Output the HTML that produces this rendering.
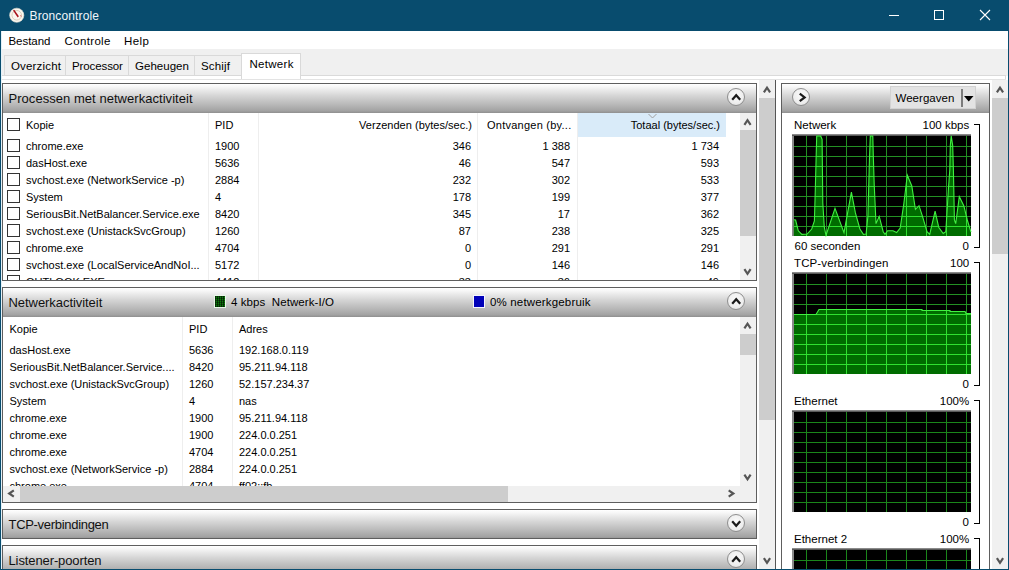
<!DOCTYPE html><html><head><meta charset="utf-8"><style>
*{box-sizing:border-box;}
html,body{margin:0;padding:0;}
body{width:1009px;height:570px;overflow:hidden;position:relative;background:#fff;font-family:"Liberation Sans",sans-serif;font-size:11px;color:#000;}
.a{position:absolute;}
svg.a{overflow:visible;}
.t{position:absolute;white-space:nowrap;}
.btn{position:absolute;width:18px;height:18px;border-radius:50%;border:1px solid #8e8e8e;background:radial-gradient(circle at 50% 40%,#fafafa 0%,#eeeeee 60%,#dadada 100%);}
</style></head><body>
<div class="a" style="left:0px;top:0px;width:1009px;height:31px;background:#084c6e;"></div>
<svg class="a" style="left:9px;top:7px" width="16" height="16" viewBox="0 0 16 16">
<circle cx="7.75" cy="8.25" r="7.1" fill="#fbf7ef" stroke="#e8e0d4" stroke-width="0.6"/>
<circle cx="7.75" cy="8.25" r="4.8" fill="none" stroke="#d6cab6" stroke-width="0.9"/>
<polygon points="4,3.6 5.3,2.8 9.9,9.3 8.7,10.4" fill="#a8121a"/>
<path d="M11.6 8.2 L12.2 9.6" stroke="#d05050" stroke-width="0.9"/></svg>
<div class="t" style="left:29.50px;top:8.84px;font-size:12px;line-height:14px;color:#f0f6fa;letter-spacing:0.130px;">Broncontrole</div>
<div class="a" style="left:889px;top:15px;width:10px;height:1px;background:#fff;"></div>
<div class="a" style="left:934px;top:10px;width:10px;height:10px;border:1px solid #fff;"></div>
<svg class="a" style="left:979px;top:9px" width="12" height="12" viewBox="0 0 12 12"><path d="M1 1 L11 11 M11 1 L1 11" stroke="#fff" stroke-width="1.1"/></svg>
<div class="t" style="left:8.50px;top:34.02px;font-size:11.5px;line-height:14px;color:#000;letter-spacing:-0.046px;">Bestand</div>
<div class="t" style="left:64.50px;top:34.02px;font-size:11.5px;line-height:14px;color:#000;letter-spacing:0.351px;">Controle</div>
<div class="t" style="left:124.00px;top:34.02px;font-size:11.5px;line-height:14px;color:#000;letter-spacing:0.423px;">Help</div>
<div class="a" style="left:1px;top:49px;width:1007px;height:27px;background:#f0f0f0;"></div>
<div class="a" style="left:1px;top:75px;width:1005px;height:1px;background:#dadada;"></div>
<div class="a" style="left:1px;top:76px;width:1005px;height:3px;background:#fff;"></div>
<div class="a" style="left:1005px;top:75px;width:1px;height:5px;background:#dadada;"></div>
<div class="a" style="left:2px;top:79px;width:1004px;height:1px;background:#e3e3e3;"></div>
<div class="a" style="left:4px;top:55px;width:62px;height:21px;border:1px solid #d9d9d9;background:#f0f0f0;"></div>
<div class="t" style="left:11.00px;top:59.02px;font-size:11.5px;line-height:14px;color:#000;letter-spacing:0.169px;">Overzicht</div>
<div class="a" style="left:65px;top:55px;width:64px;height:21px;border:1px solid #d9d9d9;background:#f0f0f0;"></div>
<div class="t" style="left:72.00px;top:59.02px;font-size:11.5px;line-height:14px;color:#000;letter-spacing:-0.106px;">Processor</div>
<div class="a" style="left:128px;top:55px;width:67px;height:21px;border:1px solid #d9d9d9;background:#f0f0f0;"></div>
<div class="t" style="left:135.00px;top:59.02px;font-size:11.5px;line-height:14px;color:#000;letter-spacing:0.030px;">Geheugen</div>
<div class="a" style="left:194px;top:55px;width:48px;height:21px;border:1px solid #d9d9d9;background:#f0f0f0;"></div>
<div class="t" style="left:201.00px;top:59.02px;font-size:11.5px;line-height:14px;color:#000;letter-spacing:0.160px;">Schijf</div>
<div class="a" style="left:241px;top:53px;width:60px;height:26px;border:1px solid #d9d9d9;border-bottom:none;background:#fff;"></div>
<div class="t" style="left:249.50px;top:57.02px;font-size:11.5px;line-height:14px;color:#000;letter-spacing:0.291px;">Netwerk</div>
<div class="a" style="left:2px;top:83px;width:755px;height:1px;background:#5e5e5e;"></div>
<div class="a" style="left:2px;top:83px;width:1px;height:30px;background:#5e5e5e;"></div>
<div class="a" style="left:756px;top:83px;width:1px;height:30px;background:#5e5e5e;"></div>
<div class="a" style="left:3px;top:84px;width:753px;height:29px;background:linear-gradient(#ffffff 0%,#f6f6f6 10%,#d6d6d6 40%,#b9b9b9 70%,#a3a3a3 92%,#8f8f8f 100%);"></div>
<div class="t" style="left:8.50px;top:90.50px;font-size:13px;line-height:16px;color:#111;letter-spacing:0.042px;">Processen met netwerkactiviteit</div>
<div class="btn" style="left:727.2px;top:88px;"></div>
<svg class="a" style="left:0;top:0" width="1009" height="570"><path d="M732.2 99.75 L736.2 95.25 L740.2 99.75" fill="none" stroke="#1a1a1a" stroke-width="2.2"/></svg>
<div class="a" style="left:2px;top:113px;width:1px;height:167px;background:#5e5e5e;"></div>
<div class="a" style="left:756px;top:113px;width:1px;height:167px;background:#5e5e5e;"></div>
<div class="a" style="left:2px;top:280px;width:755px;height:1px;background:#5e5e5e;"></div>
<div class="a" style="left:577px;top:113px;width:149px;height:24px;background:#d9ebf9;"></div>
<svg class="a" style="left:0;top:0" width="1009" height="570"><path d="M648.5 114.0 L652.5 118.0 L656.5 114.0" fill="none" stroke="#a0a0a0" stroke-width="1"/></svg>
<div class="a" style="left:208px;top:113px;width:1px;height:167px;background:#eeeeee;"></div>
<div class="a" style="left:258px;top:113px;width:1px;height:167px;background:#eeeeee;"></div>
<div class="a" style="left:477px;top:113px;width:1px;height:167px;background:#eeeeee;"></div>
<div class="a" style="left:577px;top:113px;width:1px;height:167px;background:#eeeeee;"></div>
<div class="a" style="left:7px;top:118px;width:13px;height:13px;border:1px solid #333;background:#fff;"></div>
<div class="t" style="left:26.00px;top:118.69px;font-size:11px;line-height:13px;color:#000;">Kopie</div>
<div class="t" style="left:215.00px;top:118.69px;font-size:11px;line-height:13px;color:#000;">PID</div>
<div class="t" style="left:72.02px;width:400px;text-align:right;top:118.69px;font-size:11px;line-height:13px;color:#000;letter-spacing:0.018px;">Verzenden (bytes/sec.)</div>
<div class="t" style="left:487.00px;top:118.69px;font-size:11px;line-height:13px;color:#000;letter-spacing:0.245px;">Ontvangen (by...</div>
<div class="t" style="left:320.00px;width:400px;text-align:right;top:118.69px;font-size:11px;line-height:13px;color:#000;">Totaal (bytes/sec.)</div>
<div class="a" style="left:3px;top:137px;width:737px;height:143px;overflow:hidden;">
<div class="a" style="left:4px;top:2px;width:13px;height:13px;border:1px solid #333;background:#fff;"></div>
<div class="t" style="left:23px;top:2.69px;font-size:11px;line-height:13px;">chrome.exe</div>
<div class="t" style="left:212px;top:2.69px;font-size:11px;line-height:13px;">1900</div>
<div class="t" style="left:168px;width:300px;text-align:right;top:2.69px;font-size:11px;line-height:13px;">346</div>
<div class="t" style="left:267px;width:300px;text-align:right;top:2.69px;font-size:11px;line-height:13px;">1 388</div>
<div class="t" style="left:416px;width:300px;text-align:right;top:2.69px;font-size:11px;line-height:13px;">1 734</div>
<div class="a" style="left:4px;top:19px;width:13px;height:13px;border:1px solid #333;background:#fff;"></div>
<div class="t" style="left:23px;top:19.69px;font-size:11px;line-height:13px;">dasHost.exe</div>
<div class="t" style="left:212px;top:19.69px;font-size:11px;line-height:13px;">5636</div>
<div class="t" style="left:168px;width:300px;text-align:right;top:19.69px;font-size:11px;line-height:13px;">46</div>
<div class="t" style="left:267px;width:300px;text-align:right;top:19.69px;font-size:11px;line-height:13px;">547</div>
<div class="t" style="left:416px;width:300px;text-align:right;top:19.69px;font-size:11px;line-height:13px;">593</div>
<div class="a" style="left:4px;top:36px;width:13px;height:13px;border:1px solid #333;background:#fff;"></div>
<div class="t" style="left:23px;top:36.69px;font-size:11px;line-height:13px;">svchost.exe (NetworkService -p)</div>
<div class="t" style="left:212px;top:36.69px;font-size:11px;line-height:13px;">2884</div>
<div class="t" style="left:168px;width:300px;text-align:right;top:36.69px;font-size:11px;line-height:13px;">232</div>
<div class="t" style="left:267px;width:300px;text-align:right;top:36.69px;font-size:11px;line-height:13px;">302</div>
<div class="t" style="left:416px;width:300px;text-align:right;top:36.69px;font-size:11px;line-height:13px;">533</div>
<div class="a" style="left:4px;top:53px;width:13px;height:13px;border:1px solid #333;background:#fff;"></div>
<div class="t" style="left:23px;top:53.69px;font-size:11px;line-height:13px;">System</div>
<div class="t" style="left:212px;top:53.69px;font-size:11px;line-height:13px;">4</div>
<div class="t" style="left:168px;width:300px;text-align:right;top:53.69px;font-size:11px;line-height:13px;">178</div>
<div class="t" style="left:267px;width:300px;text-align:right;top:53.69px;font-size:11px;line-height:13px;">199</div>
<div class="t" style="left:416px;width:300px;text-align:right;top:53.69px;font-size:11px;line-height:13px;">377</div>
<div class="a" style="left:4px;top:70px;width:13px;height:13px;border:1px solid #333;background:#fff;"></div>
<div class="t" style="left:23px;top:70.69px;font-size:11px;line-height:13px;">SeriousBit.NetBalancer.Service.exe</div>
<div class="t" style="left:212px;top:70.69px;font-size:11px;line-height:13px;">8420</div>
<div class="t" style="left:168px;width:300px;text-align:right;top:70.69px;font-size:11px;line-height:13px;">345</div>
<div class="t" style="left:267px;width:300px;text-align:right;top:70.69px;font-size:11px;line-height:13px;">17</div>
<div class="t" style="left:416px;width:300px;text-align:right;top:70.69px;font-size:11px;line-height:13px;">362</div>
<div class="a" style="left:4px;top:87px;width:13px;height:13px;border:1px solid #333;background:#fff;"></div>
<div class="t" style="left:23px;top:87.69px;font-size:11px;line-height:13px;">svchost.exe (UnistackSvcGroup)</div>
<div class="t" style="left:212px;top:87.69px;font-size:11px;line-height:13px;">1260</div>
<div class="t" style="left:168px;width:300px;text-align:right;top:87.69px;font-size:11px;line-height:13px;">87</div>
<div class="t" style="left:267px;width:300px;text-align:right;top:87.69px;font-size:11px;line-height:13px;">238</div>
<div class="t" style="left:416px;width:300px;text-align:right;top:87.69px;font-size:11px;line-height:13px;">325</div>
<div class="a" style="left:4px;top:104px;width:13px;height:13px;border:1px solid #333;background:#fff;"></div>
<div class="t" style="left:23px;top:104.69px;font-size:11px;line-height:13px;">chrome.exe</div>
<div class="t" style="left:212px;top:104.69px;font-size:11px;line-height:13px;">4704</div>
<div class="t" style="left:168px;width:300px;text-align:right;top:104.69px;font-size:11px;line-height:13px;">0</div>
<div class="t" style="left:267px;width:300px;text-align:right;top:104.69px;font-size:11px;line-height:13px;">291</div>
<div class="t" style="left:416px;width:300px;text-align:right;top:104.69px;font-size:11px;line-height:13px;">291</div>
<div class="a" style="left:4px;top:121px;width:13px;height:13px;border:1px solid #333;background:#fff;"></div>
<div class="t" style="left:23px;top:121.69px;font-size:11px;line-height:13px;">svchost.exe (LocalServiceAndNoI...</div>
<div class="t" style="left:212px;top:121.69px;font-size:11px;line-height:13px;">5172</div>
<div class="t" style="left:168px;width:300px;text-align:right;top:121.69px;font-size:11px;line-height:13px;">0</div>
<div class="t" style="left:267px;width:300px;text-align:right;top:121.69px;font-size:11px;line-height:13px;">146</div>
<div class="t" style="left:416px;width:300px;text-align:right;top:121.69px;font-size:11px;line-height:13px;">146</div>
<div class="a" style="left:4px;top:138px;width:13px;height:13px;border:1px solid #333;background:#fff;"></div>
<div class="t" style="left:23px;top:138.69px;font-size:11px;line-height:13px;">OUTLOOK.EXE</div>
<div class="t" style="left:212px;top:138.69px;font-size:11px;line-height:13px;">4412</div>
<div class="t" style="left:168px;width:300px;text-align:right;top:138.69px;font-size:11px;line-height:13px;">33</div>
<div class="t" style="left:267px;width:300px;text-align:right;top:138.69px;font-size:11px;line-height:13px;">36</div>
<div class="t" style="left:416px;width:300px;text-align:right;top:138.69px;font-size:11px;line-height:13px;">49</div>
</div>
<div class="a" style="left:740px;top:113px;width:16px;height:167px;background:#f0f0f0;"></div>
<div class="a" style="left:740px;top:130px;width:16px;height:106px;background:#cdcdcd;"></div>
<svg class="a" style="left:0;top:0" width="1009" height="570"><path d="M744.4 124.8 L747.5 120.2 L750.6 124.8" fill="none" stroke="#555" stroke-width="2.2"/></svg>
<svg class="a" style="left:0;top:0" width="1009" height="570"><path d="M744.4 269.2 L747.5 273.8 L750.6 269.2" fill="none" stroke="#555" stroke-width="2.2"/></svg>
<div class="a" style="left:2px;top:287px;width:755px;height:1px;background:#5e5e5e;"></div>
<div class="a" style="left:2px;top:287px;width:1px;height:30px;background:#5e5e5e;"></div>
<div class="a" style="left:756px;top:287px;width:1px;height:30px;background:#5e5e5e;"></div>
<div class="a" style="left:3px;top:288px;width:753px;height:29px;background:linear-gradient(#ffffff 0%,#f6f6f6 10%,#d6d6d6 40%,#b9b9b9 70%,#a3a3a3 92%,#8f8f8f 100%);"></div>
<div class="t" style="left:8.50px;top:294.50px;font-size:13px;line-height:16px;color:#111;letter-spacing:-0.056px;">Netwerkactiviteit</div>
<div class="btn" style="left:727.2px;top:292px;"></div>
<svg class="a" style="left:0;top:0" width="1009" height="570"><path d="M732.2 303.75 L736.2 299.25 L740.2 303.75" fill="none" stroke="#1a1a1a" stroke-width="2.2"/></svg>
<div class="a" style="left:214px;top:295px;width:12px;height:13px;border:1px solid #e8f8e8;background-color:#0c7a0c;background-image:linear-gradient(90deg,rgba(0,0,0,.55) 1px,transparent 1px),linear-gradient(rgba(0,0,0,.35) 1px,transparent 1px);background-size:2px 2px;"></div>
<div class="t" style="left:231.00px;top:295.02px;font-size:11.5px;line-height:14px;color:#000;letter-spacing:0.073px;">4 kbps&nbsp;&nbsp;Netwerk-I/O</div>
<div class="a" style="left:473px;top:295px;width:12px;height:13px;border:1px solid #f4f4ff;background:#0000b8;"></div>
<div class="t" style="left:490.00px;top:295.02px;font-size:11.5px;line-height:14px;color:#000;letter-spacing:0.164px;">0% netwerkgebruik</div>
<div class="a" style="left:2px;top:317px;width:1px;height:185px;background:#5e5e5e;"></div>
<div class="a" style="left:756px;top:317px;width:1px;height:185px;background:#5e5e5e;"></div>
<div class="a" style="left:2px;top:502px;width:755px;height:1px;background:#5e5e5e;"></div>
<div class="a" style="left:182px;top:317px;width:1px;height:169px;background:#eeeeee;"></div>
<div class="a" style="left:232px;top:317px;width:1px;height:169px;background:#eeeeee;"></div>
<div class="t" style="left:9.50px;top:322.69px;font-size:11px;line-height:13px;color:#000;">Kopie</div>
<div class="t" style="left:189.00px;top:322.69px;font-size:11px;line-height:13px;color:#000;">PID</div>
<div class="t" style="left:239.00px;top:322.69px;font-size:11px;line-height:13px;color:#000;">Adres</div>
<div class="a" style="left:3px;top:340px;width:737px;height:146px;overflow:hidden;">
<div class="t" style="left:6.5px;top:3.69px;font-size:11px;line-height:13px;">dasHost.exe</div>
<div class="t" style="left:186px;top:3.69px;font-size:11px;line-height:13px;">5636</div>
<div class="t" style="left:236px;top:3.69px;font-size:11px;line-height:13px;">192.168.0.119</div>
<div class="t" style="left:6.5px;top:20.69px;font-size:11px;line-height:13px;">SeriousBit.NetBalancer.Service....</div>
<div class="t" style="left:186px;top:20.69px;font-size:11px;line-height:13px;">8420</div>
<div class="t" style="left:236px;top:20.69px;font-size:11px;line-height:13px;">95.211.94.118</div>
<div class="t" style="left:6.5px;top:37.69px;font-size:11px;line-height:13px;">svchost.exe (UnistackSvcGroup)</div>
<div class="t" style="left:186px;top:37.69px;font-size:11px;line-height:13px;">1260</div>
<div class="t" style="left:236px;top:37.69px;font-size:11px;line-height:13px;">52.157.234.37</div>
<div class="t" style="left:6.5px;top:54.69px;font-size:11px;line-height:13px;">System</div>
<div class="t" style="left:186px;top:54.69px;font-size:11px;line-height:13px;">4</div>
<div class="t" style="left:236px;top:54.69px;font-size:11px;line-height:13px;">nas</div>
<div class="t" style="left:6.5px;top:71.69px;font-size:11px;line-height:13px;">chrome.exe</div>
<div class="t" style="left:186px;top:71.69px;font-size:11px;line-height:13px;">1900</div>
<div class="t" style="left:236px;top:71.69px;font-size:11px;line-height:13px;">95.211.94.118</div>
<div class="t" style="left:6.5px;top:88.69px;font-size:11px;line-height:13px;">chrome.exe</div>
<div class="t" style="left:186px;top:88.69px;font-size:11px;line-height:13px;">1900</div>
<div class="t" style="left:236px;top:88.69px;font-size:11px;line-height:13px;">224.0.0.251</div>
<div class="t" style="left:6.5px;top:105.69px;font-size:11px;line-height:13px;">chrome.exe</div>
<div class="t" style="left:186px;top:105.69px;font-size:11px;line-height:13px;">4704</div>
<div class="t" style="left:236px;top:105.69px;font-size:11px;line-height:13px;">224.0.0.251</div>
<div class="t" style="left:6.5px;top:122.69px;font-size:11px;line-height:13px;">svchost.exe (NetworkService -p)</div>
<div class="t" style="left:186px;top:122.69px;font-size:11px;line-height:13px;">2884</div>
<div class="t" style="left:236px;top:122.69px;font-size:11px;line-height:13px;">224.0.0.251</div>
<div class="t" style="left:6.5px;top:139.69px;font-size:11px;line-height:13px;">chrome.exe</div>
<div class="t" style="left:186px;top:139.69px;font-size:11px;line-height:13px;">4704</div>
<div class="t" style="left:236px;top:139.69px;font-size:11px;line-height:13px;">ff02::fb</div>
</div>
<div class="a" style="left:740px;top:317px;width:16px;height:185px;background:#f0f0f0;"></div>
<div class="a" style="left:740px;top:334px;width:16px;height:21px;background:#cdcdcd;"></div>
<svg class="a" style="left:0;top:0" width="1009" height="570"><path d="M744.4 328.3 L747.5 323.7 L750.6 328.3" fill="none" stroke="#555" stroke-width="2.2"/></svg>
<svg class="a" style="left:0;top:0" width="1009" height="570"><path d="M744.4 474.7 L747.5 479.3 L750.6 474.7" fill="none" stroke="#555" stroke-width="2.2"/></svg>
<div class="a" style="left:3px;top:486px;width:737px;height:16px;background:#f0f0f0;"></div>
<div class="a" style="left:20px;top:486px;width:488px;height:16px;background:#cdcdcd;"></div>
<svg class="a" style="left:0;top:0" width="1009" height="570"><path d="M13.8 490.4 L9.2 493.5 L13.8 496.6" fill="none" stroke="#555" stroke-width="2.2"/></svg>
<svg class="a" style="left:0;top:0" width="1009" height="570"><path d="M728.7 490.4 L733.3 493.5 L728.7 496.6" fill="none" stroke="#555" stroke-width="2.2"/></svg>
<div class="a" style="left:2px;top:509px;width:755px;height:1px;background:#5e5e5e;"></div>
<div class="a" style="left:2px;top:509px;width:1px;height:30px;background:#5e5e5e;"></div>
<div class="a" style="left:756px;top:509px;width:1px;height:30px;background:#5e5e5e;"></div>
<div class="a" style="left:3px;top:510px;width:753px;height:29px;background:linear-gradient(#ffffff 0%,#f6f6f6 10%,#d6d6d6 40%,#b9b9b9 70%,#a3a3a3 92%,#8f8f8f 100%);"></div>
<div class="t" style="left:8.50px;top:516.50px;font-size:13px;line-height:16px;color:#111;letter-spacing:-0.302px;">TCP-verbindingen</div>
<div class="btn" style="left:727.2px;top:514px;"></div>
<svg class="a" style="left:0;top:0" width="1009" height="570"><path d="M732.2 521.25 L736.2 525.75 L740.2 521.25" fill="none" stroke="#1a1a1a" stroke-width="2.2"/></svg>
<div class="a" style="left:2px;top:538px;width:755px;height:1px;background:#5e5e5e;"></div>
<div class="a" style="left:2px;top:545px;width:755px;height:1px;background:#5e5e5e;"></div>
<div class="a" style="left:2px;top:545px;width:1px;height:30px;background:#5e5e5e;"></div>
<div class="a" style="left:756px;top:545px;width:1px;height:30px;background:#5e5e5e;"></div>
<div class="a" style="left:3px;top:546px;width:753px;height:29px;background:linear-gradient(#ffffff 0%,#f6f6f6 10%,#d6d6d6 40%,#b9b9b9 70%,#a3a3a3 92%,#8f8f8f 100%);"></div>
<div class="t" style="left:8.50px;top:552.50px;font-size:13px;line-height:16px;color:#111;letter-spacing:-0.108px;">Listener-poorten</div>
<div class="btn" style="left:727.2px;top:550px;"></div>
<svg class="a" style="left:0;top:0" width="1009" height="570"><path d="M732.2 561.75 L736.2 557.25 L740.2 561.75" fill="none" stroke="#1a1a1a" stroke-width="2.2"/></svg>
<div class="a" style="left:759px;top:80px;width:16px;height:489px;background:#f0f0f0;"></div>
<div class="a" style="left:759px;top:98px;width:16px;height:322px;background:#cdcdcd;"></div>
<svg class="a" style="left:0;top:0" width="1009" height="570"><path d="M763.9 92.3 L767 87.7 L770.1 92.3" fill="none" stroke="#555" stroke-width="2.2"/></svg>
<svg class="a" style="left:0;top:0" width="1009" height="570"><path d="M763.9 558.2 L767 562.8 L770.1 558.2" fill="none" stroke="#555" stroke-width="2.2"/></svg>
<div class="a" style="left:775px;top:80px;width:1px;height:489px;background:#555;"></div>
<div class="a" style="left:781px;top:83px;width:209px;height:487px;border:1px solid #5e5e5e;border-bottom:none;background:#fff;"></div>
<div class="a" style="left:782px;top:84px;width:207px;height:29px;background:linear-gradient(#ffffff 0%,#f6f6f6 10%,#d6d6d6 40%,#b9b9b9 70%,#a3a3a3 92%,#8f8f8f 100%);"></div>
<div class="btn" style="left:792.2px;top:88.4px;"></div>
<svg class="a" style="left:0;top:0" width="1009" height="570"><path d="M799.75 93.60000000000001 L804.6500000000001 97.4 L799.75 101.2" fill="none" stroke="#1a1a1a" stroke-width="2.2"/></svg>
<div class="a" style="left:890px;top:86px;width:86px;height:23px;background:#e3e3e3;border:1px solid #d2d2d2;"></div>
<div class="t" style="left:895.50px;top:90.52px;font-size:11.5px;line-height:14px;color:#000;letter-spacing:0.040px;">Weergaven</div>
<div class="a" style="left:961px;top:89px;width:2px;height:18px;background:#7c7c7c;"></div>
<svg class="a" style="left:0;top:0" width="1009" height="570"><path d="M964 96 L973.5 96 L968.75 101.5 Z" fill="#000"/></svg>
<div class="t" style="left:794.00px;top:117.52px;font-size:11.5px;line-height:14px;color:#000;">Netwerk</div>
<div class="t" style="left:569.20px;width:400px;text-align:right;top:117.52px;font-size:11.5px;line-height:14px;color:#000;">100 kbps</div>
<div class="a" style="left:974px;top:124px;width:6px;height:1px;background:#000;"></div>
<div class="a" style="left:979px;top:124px;width:1px;height:124px;background:#000;"></div>
<div class="a" style="left:974px;top:247px;width:6px;height:1px;background:#000;"></div>
<div class="t" style="left:794.50px;top:239.02px;font-size:11.5px;line-height:14px;color:#000;">60 seconden</div>
<div class="t" style="left:569.00px;width:400px;text-align:right;top:239.02px;font-size:11.5px;line-height:14px;color:#000;">0</div>
<svg class="a" style="left:0;top:0" width="1009" height="570"><rect x="792" y="134" width="179" height="102" fill="#000"/><rect x="792" y="134" width="179" height="2" fill="#8a8a8a"/><rect x="792" y="134" width="2" height="102" fill="#8a8a8a"/><rect x="792" y="135" width="179" height="1" fill="#5a5a5a"/><clipPath id="cg0"><polygon points="794,236 793.8,236 793.8,219.7 795.6,220.0 798.3,230.8 801.9,234.4 807.2,234.0 811.7,229.0 814.4,221.0 815.3,189.6 816.7,136.0 820.7,136.0 822.1,139.4 822.8,203.0 824.3,227.2 826.0,235.3 835.0,208.4 844.0,232.6 851.4,192.2 855.4,212.9 859.9,229.0 863.4,234.4 866.1,234.0 867.9,216.4 869.4,160.9 870.3,136.0 872.8,136.0 873.3,155.5 874.2,184.2 876.0,223.6 879.2,216.4 883.2,231.7 885.0,234.4 887.6,230.8 893.0,230.8 896.6,232.6 900.2,228.1 903.8,203.9 907.3,175.2 911.8,186.0 915.4,209.3 919.0,205.7 922.5,216.4 927.0,231.7 929.7,234.4 935.1,211.1 938.7,227.2 943.2,233.5 945.8,231.7 948.5,187.8 949.8,169.8 950.3,145.6 951.2,135.8 952.7,145.6 953.4,169.8 954.4,220.0 955.7,223.6 959.3,196.7 963.8,205.7 967.3,220.0 970.6,230.8 971.0,232.0 971,236"/></clipPath><path d="M794 146.5 H971 M794 156.5 H971 M794 166.5 H971 M794 176.5 H971 M794 186.5 H971 M794 196.5 H971 M794 206.5 H971 M794 216.5 H971 M794 226.5 H971 M806.5 136 V236 M826.5 136 V236 M846.5 136 V236 M866.5 136 V236 M886.5 136 V236 M906.5 136 V236 M926.5 136 V236 M946.5 136 V236 M966.5 136 V236" stroke="#239023" stroke-width="1"/><polygon points="794,236 793.8,236 793.8,219.7 795.6,220.0 798.3,230.8 801.9,234.4 807.2,234.0 811.7,229.0 814.4,221.0 815.3,189.6 816.7,136.0 820.7,136.0 822.1,139.4 822.8,203.0 824.3,227.2 826.0,235.3 835.0,208.4 844.0,232.6 851.4,192.2 855.4,212.9 859.9,229.0 863.4,234.4 866.1,234.0 867.9,216.4 869.4,160.9 870.3,136.0 872.8,136.0 873.3,155.5 874.2,184.2 876.0,223.6 879.2,216.4 883.2,231.7 885.0,234.4 887.6,230.8 893.0,230.8 896.6,232.6 900.2,228.1 903.8,203.9 907.3,175.2 911.8,186.0 915.4,209.3 919.0,205.7 922.5,216.4 927.0,231.7 929.7,234.4 935.1,211.1 938.7,227.2 943.2,233.5 945.8,231.7 948.5,187.8 949.8,169.8 950.3,145.6 951.2,135.8 952.7,145.6 953.4,169.8 954.4,220.0 955.7,223.6 959.3,196.7 963.8,205.7 967.3,220.0 970.6,230.8 971.0,232.0 971,236" fill="#006c00"/><path d="M794 146.5 H971 M794 156.5 H971 M794 166.5 H971 M794 176.5 H971 M794 186.5 H971 M794 196.5 H971 M794 206.5 H971 M794 216.5 H971 M794 226.5 H971 M806.5 136 V236 M826.5 136 V236 M846.5 136 V236 M866.5 136 V236 M886.5 136 V236 M906.5 136 V236 M926.5 136 V236 M946.5 136 V236 M966.5 136 V236" stroke="#30e030" stroke-width="1" clip-path="url(#cg0)"/><polyline points="793.8,219.7 795.6,220.0 798.3,230.8 801.9,234.4 807.2,234.0 811.7,229.0 814.4,221.0 815.3,189.6 816.7,136.0 820.7,136.0 822.1,139.4 822.8,203.0 824.3,227.2 826.0,235.3 835.0,208.4 844.0,232.6 851.4,192.2 855.4,212.9 859.9,229.0 863.4,234.4 866.1,234.0 867.9,216.4 869.4,160.9 870.3,136.0 872.8,136.0 873.3,155.5 874.2,184.2 876.0,223.6 879.2,216.4 883.2,231.7 885.0,234.4 887.6,230.8 893.0,230.8 896.6,232.6 900.2,228.1 903.8,203.9 907.3,175.2 911.8,186.0 915.4,209.3 919.0,205.7 922.5,216.4 927.0,231.7 929.7,234.4 935.1,211.1 938.7,227.2 943.2,233.5 945.8,231.7 948.5,187.8 949.8,169.8 950.3,145.6 951.2,135.8 952.7,145.6 953.4,169.8 954.4,220.0 955.7,223.6 959.3,196.7 963.8,205.7 967.3,220.0 970.6,230.8 971.0,232.0" fill="none" stroke="#40f040" stroke-width="1.1"/></svg>
<div class="t" style="left:794.00px;top:255.52px;font-size:11.5px;line-height:14px;color:#000;letter-spacing:0.116px;">TCP-verbindingen</div>
<div class="t" style="left:569.20px;width:400px;text-align:right;top:255.52px;font-size:11.5px;line-height:14px;color:#000;">100</div>
<div class="a" style="left:974px;top:262px;width:6px;height:1px;background:#000;"></div>
<div class="a" style="left:979px;top:262px;width:1px;height:124px;background:#000;"></div>
<div class="a" style="left:974px;top:385px;width:6px;height:1px;background:#000;"></div>
<div class="t" style="left:569.00px;width:400px;text-align:right;top:377.02px;font-size:11.5px;line-height:14px;color:#000;">0</div>
<svg class="a" style="left:0;top:0" width="1009" height="570"><rect x="792" y="272" width="179" height="102" fill="#000"/><rect x="792" y="272" width="179" height="2" fill="#8a8a8a"/><rect x="792" y="272" width="2" height="102" fill="#8a8a8a"/><rect x="792" y="273" width="179" height="1" fill="#5a5a5a"/><clipPath id="cg1"><polygon points="794,374 794.0,374 794.0,314.5 816.0,314.5 819.0,309.5 922.0,309.5 922.0,310.5 950.0,310.5 950.0,311.5 965.0,311.5 966.0,313.5 971.0,313.5 971,374"/></clipPath><path d="M794 284.5 H971 M794 294.5 H971 M794 304.5 H971 M794 314.5 H971 M794 324.5 H971 M794 334.5 H971 M794 344.5 H971 M794 354.5 H971 M794 364.5 H971 M806.5 274 V374 M826.5 274 V374 M846.5 274 V374 M866.5 274 V374 M886.5 274 V374 M906.5 274 V374 M926.5 274 V374 M946.5 274 V374 M966.5 274 V374" stroke="#239023" stroke-width="1"/><polygon points="794,374 794.0,374 794.0,314.5 816.0,314.5 819.0,309.5 922.0,309.5 922.0,310.5 950.0,310.5 950.0,311.5 965.0,311.5 966.0,313.5 971.0,313.5 971,374" fill="#006c00"/><path d="M794 284.5 H971 M794 294.5 H971 M794 304.5 H971 M794 314.5 H971 M794 324.5 H971 M794 334.5 H971 M794 344.5 H971 M794 354.5 H971 M794 364.5 H971 M806.5 274 V374 M826.5 274 V374 M846.5 274 V374 M866.5 274 V374 M886.5 274 V374 M906.5 274 V374 M926.5 274 V374 M946.5 274 V374 M966.5 274 V374" stroke="#30e030" stroke-width="1" clip-path="url(#cg1)"/><polyline points="794.0,314.5 816.0,314.5 819.0,309.5 922.0,309.5 922.0,310.5 950.0,310.5 950.0,311.5 965.0,311.5 966.0,313.5 971.0,313.5" fill="none" stroke="#40f040" stroke-width="1.1"/></svg>
<div class="t" style="left:794.00px;top:393.52px;font-size:11.5px;line-height:14px;color:#000;">Ethernet</div>
<div class="t" style="left:569.20px;width:400px;text-align:right;top:393.52px;font-size:11.5px;line-height:14px;color:#000;">100%</div>
<div class="a" style="left:974px;top:400px;width:6px;height:1px;background:#000;"></div>
<div class="a" style="left:979px;top:400px;width:1px;height:124px;background:#000;"></div>
<div class="a" style="left:974px;top:523px;width:6px;height:1px;background:#000;"></div>
<div class="t" style="left:569.00px;width:400px;text-align:right;top:515.02px;font-size:11.5px;line-height:14px;color:#000;">0</div>
<svg class="a" style="left:0;top:0" width="1009" height="570"><rect x="792" y="410" width="179" height="102" fill="#000"/><rect x="792" y="410" width="179" height="2" fill="#8a8a8a"/><rect x="792" y="410" width="2" height="102" fill="#8a8a8a"/><rect x="792" y="411" width="179" height="1" fill="#5a5a5a"/><path d="M794 422.5 H971 M794 432.5 H971 M794 442.5 H971 M794 452.5 H971 M794 462.5 H971 M794 472.5 H971 M794 482.5 H971 M794 492.5 H971 M794 502.5 H971 M806.5 412 V512 M826.5 412 V512 M846.5 412 V512 M866.5 412 V512 M886.5 412 V512 M906.5 412 V512 M926.5 412 V512 M946.5 412 V512 M966.5 412 V512" stroke="#1b861b" stroke-width="1"/></svg>
<div class="t" style="left:794.00px;top:531.52px;font-size:11.5px;line-height:14px;color:#000;">Ethernet 2</div>
<div class="t" style="left:569.20px;width:400px;text-align:right;top:531.52px;font-size:11.5px;line-height:14px;color:#000;">100%</div>
<div class="a" style="left:974px;top:538px;width:6px;height:1px;background:#000;"></div>
<div class="a" style="left:979px;top:538px;width:1px;height:124px;background:#000;"></div>
<div class="a" style="left:974px;top:661px;width:6px;height:1px;background:#000;"></div>
<div class="t" style="left:569.00px;width:400px;text-align:right;top:653.02px;font-size:11.5px;line-height:14px;color:#000;">0</div>
<svg class="a" style="left:0;top:0" width="1009" height="570"><rect x="792" y="548" width="179" height="102" fill="#000"/><rect x="792" y="548" width="179" height="2" fill="#8a8a8a"/><rect x="792" y="548" width="2" height="102" fill="#8a8a8a"/><rect x="792" y="549" width="179" height="1" fill="#5a5a5a"/><path d="M794 560.5 H971 M794 570.5 H971 M794 580.5 H971 M794 590.5 H971 M794 600.5 H971 M794 610.5 H971 M794 620.5 H971 M794 630.5 H971 M794 640.5 H971 M806.5 550 V650 M826.5 550 V650 M846.5 550 V650 M866.5 550 V650 M886.5 550 V650 M906.5 550 V650 M926.5 550 V650 M946.5 550 V650 M966.5 550 V650" stroke="#1b861b" stroke-width="1"/></svg>
<div class="a" style="left:992px;top:80px;width:16px;height:489px;background:#f0f0f0;"></div>
<div class="a" style="left:992px;top:98px;width:16px;height:156px;background:#cdcdcd;"></div>
<svg class="a" style="left:0;top:0" width="1009" height="570"><path d="M996.9 92.3 L1000 87.7 L1003.1 92.3" fill="none" stroke="#555" stroke-width="2.2"/></svg>
<svg class="a" style="left:0;top:0" width="1009" height="570"><path d="M996.9 558.2 L1000 562.8 L1003.1 558.2" fill="none" stroke="#555" stroke-width="2.2"/></svg>
<div class="a" style="left:0px;top:0px;width:1px;height:570px;background:#084c6e;"></div>
<div class="a" style="left:1px;top:31px;width:1px;height:538px;background:#e4f1f8;"></div>
<div class="a" style="left:1008px;top:0px;width:1px;height:570px;background:#084c6e;"></div>
<div class="a" style="left:0px;top:569px;width:1009px;height:1px;background:#084c6e;"></div>
</body></html>
